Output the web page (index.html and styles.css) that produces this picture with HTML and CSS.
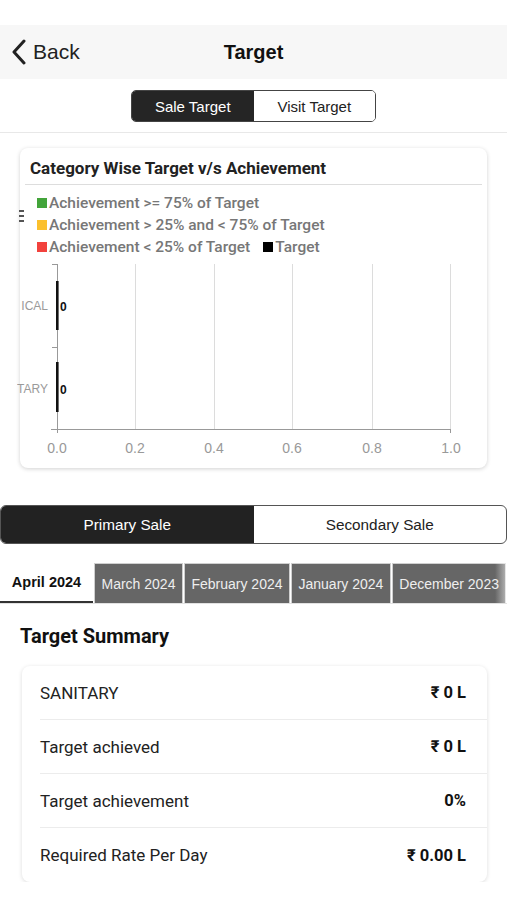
FILE: index.html
```html
<!DOCTYPE html>
<html>
<head>
<meta charset="utf-8">
<link rel="stylesheet" href="styles.css">
</head>
<body>
<div class="status"></div>
<header class="header">
  <div class="back">
    <svg class="chev" width="16" height="26" viewBox="0 0 16 26"><path d="M13 2 L3 13 L13 24" fill="none" stroke="#222" stroke-width="3" stroke-linecap="round" stroke-linejoin="round"/></svg>
    <span>Back</span>
  </div>
  <div class="title">Target</div>
</header>
<div class="seg-wrap">
  <div class="seg">
    <div class="seg-item active">Sale Target</div>
    <div class="seg-item">Visit Target</div>
  </div>
</div>

<section class="chart-card">
  <div class="chart-title">Category Wise Target v/s Achievement</div>
  <div class="legend">
    <div class="menu-dash"><i></i><i></i><i></i></div>
    <div class="lg-row"><span class="sq green"></span>Achievement &gt;= 75% of Target</div>
    <div class="lg-row"><span class="sq yellow"></span>Achievement &gt; 25% and &lt; 75% of Target</div>
    <div class="lg-row"><span class="sq red"></span>Achievement &lt; 25% of Target <span class="sq black gap"></span>Target</div>
  </div>
  <svg class="chart" width="470" height="205" viewBox="17 257 470 205">
    <g stroke="#dcdcdc" stroke-width="1">
      <line x1="135.5" y1="265" x2="135.5" y2="430"/>
      <line x1="214.5" y1="265" x2="214.5" y2="430"/>
      <line x1="292.5" y1="265" x2="292.5" y2="430"/>
      <line x1="372.5" y1="265" x2="372.5" y2="430"/>
      <line x1="450.5" y1="265" x2="450.5" y2="430"/>
    </g>
    <g stroke="#999" stroke-width="1">
      <line x1="57.5" y1="265" x2="57.5" y2="430.5"/>
      <line x1="52" y1="265.5" x2="57.5" y2="265.5"/>
      <line x1="52" y1="348.5" x2="57.5" y2="348.5"/>
      <line x1="51" y1="430.5" x2="451" y2="430.5"/>
      <line x1="450.5" y1="430" x2="450.5" y2="434"/>
      <line x1="57.5" y1="430" x2="57.5" y2="434"/>
    </g>
    <rect x="56" y="282" width="2.6" height="49" fill="#111"/>
    <rect x="56" y="363" width="2.6" height="50" fill="#111"/>
    <text x="60" y="312" class="val">0</text>
    <text x="60" y="395" class="val">0</text>
    <text x="48" y="311" class="cat" text-anchor="end">ICAL</text>
    <text x="48" y="394" class="cat" text-anchor="end">TARY</text>
    <g class="tick" text-anchor="middle">
      <text x="57" y="454">0.0</text>
      <text x="135" y="454">0.2</text>
      <text x="214" y="454">0.4</text>
      <text x="292" y="454">0.6</text>
      <text x="372" y="454">0.8</text>
      <text x="451" y="454">1.0</text>
    </g>
  </svg>
</section>

<div class="sale-seg">
  <div class="sale-item active">Primary Sale</div>
  <div class="sale-item">Secondary Sale</div>
</div>

<nav class="tabs">
  <div class="tab current">April 2024</div>
  <div class="tab">March 2024</div>
  <div class="tab">February 2024</div>
  <div class="tab">January 2024</div>
  <div class="tab">December 2023</div>
  <div class="fade"></div>
</nav>

<h2 class="sum-title">Target Summary</h2>
<section class="sum-card">
  <div class="row"><span>SANITARY</span><b>₹ 0 L</b></div>
  <div class="row"><span>Target achieved</span><b>₹ 0 L</b></div>
  <div class="row"><span>Target achievement</span><b>0%</b></div>
  <div class="row last"><span>Required Rate Per Day</span><b>₹ 0.00 L</b></div>
</section>
</body>
</html>
```

FILE: styles.css
```css
* { box-sizing: border-box; }
body {
  margin: 0;
  background: #fff;
  font-family: "Liberation Sans", Arial, sans-serif;
  color: #111;
  width: 507px;
  overflow: hidden;
}
.status { height: 25px; background: #fff; }
.header {
  height: 54px;
  background: #f7f7f7;
  position: relative;
  display: flex;
  align-items: center;
  justify-content: center;
}
.back {
  position: absolute;
  left: 11px;
  top: 14px;
  display: flex;
  align-items: center;
  gap: 6px;
  font-size: 21px;
  color: #222;
}
.chev { display: block; }
.title { font-size: 20px; font-weight: bold; color: #111; }
.seg-wrap {
  display: flex;
  justify-content: center;
  padding: 11px 0 10px;
  border-bottom: 1px solid #e8e8e8;
}
.seg {
  display: flex;
  width: 245px;
  height: 32px;
  border: 1px solid #444;
  border-radius: 5px;
  overflow: hidden;
}
.seg-item {
  flex: 1;
  display: flex;
  align-items: center;
  justify-content: center;
  font-size: 15px;
  color: #222;
  background: #fff;
}
.seg-item.active { background: #252525; color: #fff; }

.chart-card {
  margin: 15px 20px 0 20px;
  height: 320px;
  border-radius: 8px;
  box-shadow: 0 1px 4px rgba(0,0,0,0.18);
  background: #fff;
  position: relative;
  font-family: Roboto, "Liberation Sans", sans-serif;
}
.chart-title {
  margin: 0 5px;
  padding: 10px 0 0 5px;
  height: 37px;
  border-bottom: 1px solid #ddd;
  font-size: 17px;
  line-height: 20px;
  font-weight: bold;
  color: #222;
}
.legend { padding: 7px 0 0 17px; }
.lg-row {
  height: 22px;
  display: flex;
  align-items: center;
  font-size: 15.5px;
  font-weight: 500;
  color: #777;
}
.sq { width: 10px; height: 10px; margin-right: 2px; display: inline-block; flex: none; }
.green { background: #43a43a; }
.yellow { background: #fbc02d; }
.red { background: #f2423d; }
.black { background: #000; }
.gap { margin-left: 13px; }
.menu-dash {
  position: absolute;
  left: -1px;
  top: 62px;
  display: flex;
  flex-direction: column;
  gap: 3px;
}
.menu-dash i { display: block; width: 5px; height: 2px; background: #555; }
.chart { display: block; margin: -2px 0 0 -3px; }
.chart .val { font-size: 12px; font-weight: bold; fill: #111; font-family: "Liberation Sans", Arial, sans-serif; }
.chart .cat { font-size: 12px; fill: #9a9a9a; font-family: "Liberation Sans", Arial, sans-serif; }
.chart .tick text { font-size: 14px; fill: #999; font-family: "Liberation Sans", Arial, sans-serif; }

.sale-seg {
  margin-top: 37px;
  display: flex;
  height: 39px;
  border: 1px solid #555;
  border-radius: 6px;
  overflow: hidden;
}
.sale-item {
  flex: 1;
  display: flex;
  align-items: center;
  justify-content: center;
  font-size: 15.3px;
  color: #222;
}
.sale-item.active { background: #222; color: #fff; }

.tabs {
  margin-top: 19px;
  height: 41px;
  display: flex;
  position: relative;
  overflow: hidden;
  border-bottom: 1px solid #e2e2e2;
}
.tab {
  flex: none;
  display: flex;
  align-items: center;
  padding: 0 6.5px;
  font-size: 14px;
  background: #666;
  color: #eee;
  border: 1px solid #cfcfcf;
  border-bottom: none;
  margin-right: 1px;
  height: 40px;
  white-space: nowrap;
}
.tab.current {
  width: 93px;
  justify-content: center;
  padding: 0;
  font-size: 14.5px;
  background: #fff;
  color: #111;
  font-weight: bold;
  border: none;
  border-bottom: 2px solid #333;
  margin-right: 1px;
}
.fade {
  position: absolute;
  right: 0;
  top: 0;
  width: 12px;
  height: 40px;
  background: linear-gradient(to right, rgba(255,255,255,0), rgba(255,255,255,0.55));
}

.sum-title {
  margin: 19px 0 0 20px;
  font-family: Roboto, "Liberation Sans", sans-serif;
  font-size: 20px;
  line-height: 26px;
  font-weight: bold;
  color: #111;
}
.sum-card {
  margin: 17px 20px 0 22px;
  border-radius: 8px;
  box-shadow: 0 1px 4px rgba(0,0,0,0.14);
  background: #fff;
  font-family: Roboto, "Liberation Sans", sans-serif;
}
.row {
  margin-left: 18px;
  padding-right: 21px;
  height: 54px;
  display: flex;
  align-items: center;
  justify-content: space-between;
  border-bottom: 1px solid #ececec;
  font-size: 17px;
  color: #222;
}
.row.last { border-bottom: none; }
.row b { font-weight: bold; color: #111; font-size: 16.5px; }
```
